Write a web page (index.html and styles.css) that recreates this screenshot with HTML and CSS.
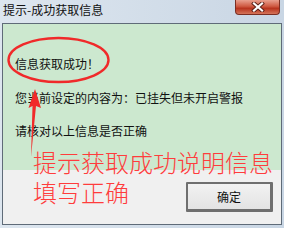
FILE: index.html
```html
<!DOCTYPE html>
<html lang="zh-CN">
<head>
    <meta charset="UTF-8">
    <title>提示-成功获取信息</title>
    <link rel="stylesheet" href="styles.css">
</head>
<body>
    <div class="window">
        <div class="titlebar">
            <span class="title">提示-成功获取信息</span>
            <span class="close">
                <svg width="14" height="10" viewBox="0 0 14 10">
                    <path d="M3 1.5 L11 8.5 M11 1.5 L3 8.5" stroke="#5a2018" stroke-width="4" stroke-linecap="square"/>
                    <path d="M3 1.5 L11 8.5 M11 1.5 L3 8.5" stroke="#ffffff" stroke-width="2.2" stroke-linecap="square"/>
                </svg>
            </span>
        </div>
        <div class="client">
            <div class="content">
                <p class="line">信息获取成功！</p>
                <p class="line">您当前设定的内容为：已挂失但未开启警报</p>
                <p class="line">请核对以上信息是否正确</p>
            </div>
            <div class="footer">
                <button class="ok">确定</button>
            </div>
        </div>

        <!-- annotation drawn over the dialog -->
        <svg class="marks" width="284" height="228" viewBox="0 0 284 228">
            <ellipse cx="58.5" cy="60" rx="50" ry="22" fill="none" stroke="#f02a2a" stroke-width="2.4"/>
            <polygon points="35,89 41,108 36,106 31,157 32.5,106 28.5,108" fill="#f02a2a"/>
        </svg>
        <div class="note">
            <div class="note-line">提示获取成功说明信息</div>
            <div class="note-line">填写正确</div>
        </div>
    </div>
</body>
</html>
```

FILE: styles.css
```css
body {
    margin: 0;
    font-family: "Noto Sans CJK SC", "Liberation Sans", sans-serif;
    font-size: 12px;
    color: #111;
}
.window {
    position: relative;
    width: 284px;
    height: 228px;
    box-sizing: border-box;
    display: flex;
    flex-direction: column;
    background: linear-gradient(to right, #dde6ef, #c9d6e4);
    overflow: hidden;
}
.titlebar {
    height: 23px;
    display: flex;
    justify-content: space-between;
    align-items: flex-start;
    padding: 0 4px 0 3px;
    flex-shrink: 0;
}
.title {
    line-height: 16px;
    padding-top: 2px;
    color: #111;
}
.close {
    width: 43px;
    height: 14px;
    border: 1px solid #7b2e22;
    border-top: none;
    border-radius: 0 0 4px 4px;
    background: linear-gradient(#e9a08f, #cf5a42 45%, #b8341e 60%, #d4755a);
    display: flex;
    align-items: center;
    justify-content: center;
}
.close svg {
    display: block;
}
.client {
    flex: 1;
    margin: 0 2px 3px 2px;
    border: 1px solid #5f6b78;
    display: flex;
    flex-direction: column;
    background: #f0f0f0;
}
.content {
    height: 146px;
    background: #cce8cf;
    padding: 32px 0 0 12px;
    box-sizing: border-box;
}
.line {
    margin: 0;
    line-height: 16px;
}
.line + .line {
    margin-top: 18px;
}
.line:last-child {
    margin-top: 17px;
}
.footer {
    flex: 1;
    display: flex;
    justify-content: flex-end;
    align-items: flex-start;
    padding: 12px 8px 0 0;
}
.ok {
    width: 87px;
    height: 30px;
    box-sizing: border-box;
    border: 2px solid #6f6f6f;
    border-right-width: 3px;
    border-bottom-width: 3px;
    border-radius: 1px;
    background: linear-gradient(#f2f2f2, #e3e3e3);
    font-family: inherit;
    font-size: 12px;
    color: #111;
    padding: 0;
}
.marks {
    position: absolute;
    left: 0;
    top: 0;
    pointer-events: none;
}
.note {
    position: absolute;
    left: 33px;
    top: 147px;
    font-size: 24px;
    font-weight: 300;
    color: #ff3c3c;
    white-space: nowrap;
}
.note-line {
    height: 30px;
    line-height: 30px;
}
```
